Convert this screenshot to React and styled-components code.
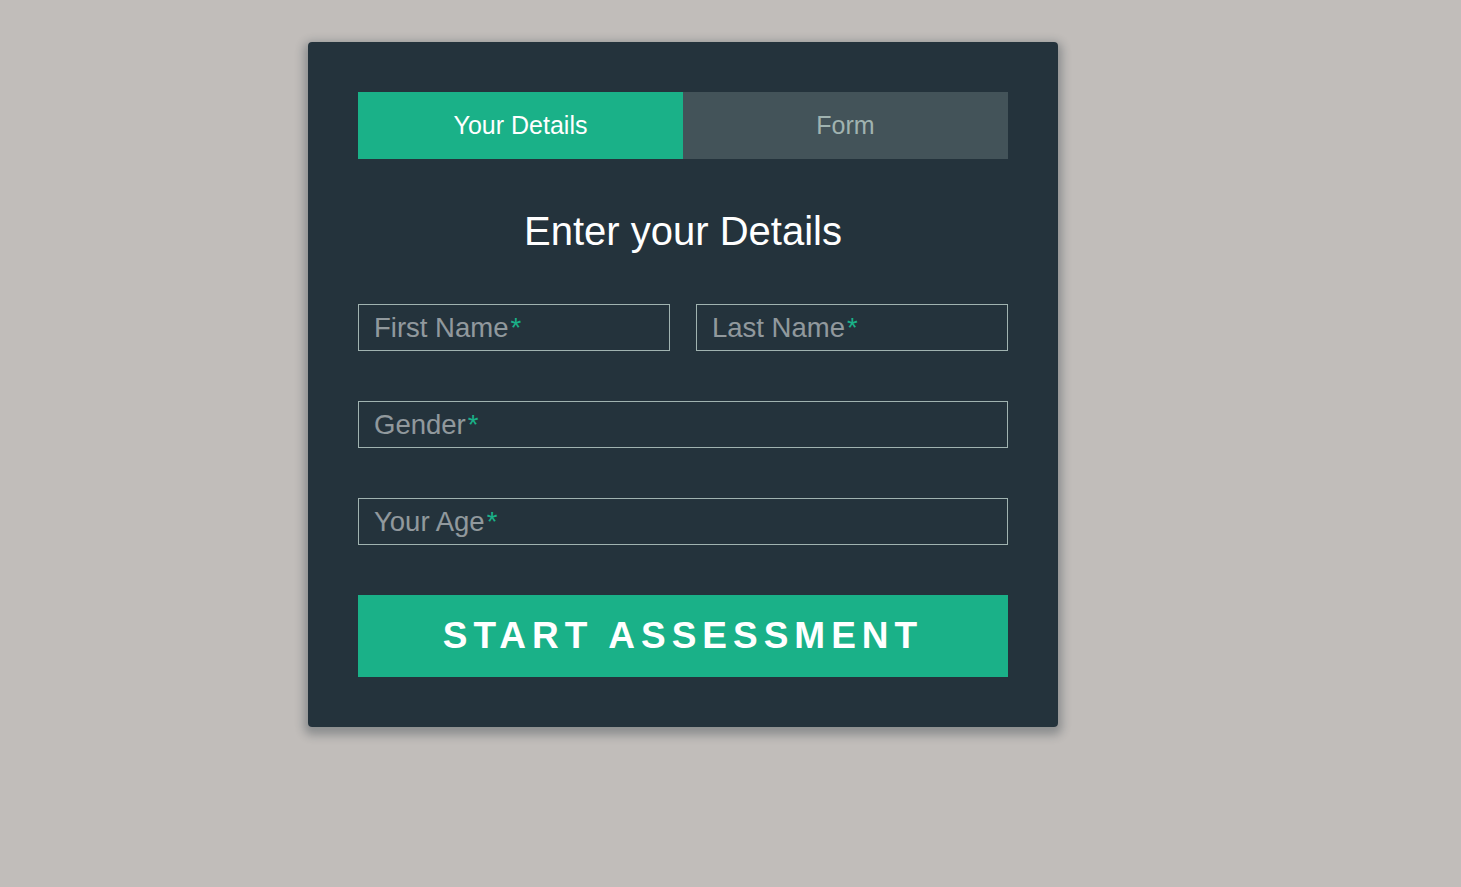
import styled, { createGlobalStyle } from 'styled-components';

const GlobalStyle = createGlobalStyle`
  *, *::before, *::after {
    box-sizing: border-box;
  }
  html, body {
    margin: 0;
    padding: 0;
    background: #c1bdba;
    font-family: "Liberation Sans", Arial, sans-serif;
  }
`;

// Page holds the card at its place on the grey background
const Page = styled.div`
  min-height: 887px;
  padding: 42px 0 0 308px;
`;

const Card = styled.div`
  width: 750px;
  padding: 50px;
  background: rgba(19, 35, 47, 0.9);
  border-radius: 4px;
  box-shadow: 0 4px 10px 4px rgba(19, 35, 47, 0.3);
`;

const TabGroup = styled.ul`
  list-style: none;
  margin: 0;
  padding: 0;
  display: grid;
  grid-template-columns: 1fr 1fr;
`;

const Tab = styled.li`
  height: 67px;
  display: flex;
  align-items: center;
  justify-content: center;
  font-size: 25px;
  color: ${(p) => (p.$active ? '#ffffff' : '#a0b3b0')};
  background: ${(p) => (p.$active ? '#1ab188' : 'rgba(160, 179, 176, 0.25)')};
  cursor: pointer;
`;

const Heading = styled.h1`
  margin: 48px 0 49px;
  font-size: 40px;
  line-height: 48px;
  font-weight: 300;
  color: #ffffff;
  text-align: center;
`;

const Form = styled.form`
  display: flex;
  flex-direction: column;
  gap: 50px;
`;

const Row = styled.div`
  display: grid;
  grid-template-columns: 1fr 1fr;
  gap: 26px;
`;

const Field = styled.label`
  height: 47px;
  display: flex;
  align-items: center;
  padding: 0 15px;
  border: 1px solid #a0b3b0;
  font-size: 27.5px;
  color: rgba(255, 255, 255, 0.5);
  cursor: text;
`;

const Req = styled.span`
  margin-left: 2px;
  color: #1ab188;
`;

const SubmitButton = styled.button`
  height: 82px;
  border: 0;
  border-radius: 0;
  background: #1ab188;
  color: #ffffff;
  font-family: inherit;
  font-size: 37px;
  font-weight: bold;
  text-transform: uppercase;
  letter-spacing: 0.162em;
  padding: 0;
  cursor: pointer;
`;

const InputField = ({ label }) => (
  <Field>
    {label}
    <Req>*</Req>
  </Field>
);

const App = () => (
  <>
    <GlobalStyle />
    <Page>
      <Card>
        <TabGroup>
          <Tab $active>Your Details</Tab>
          <Tab>Form</Tab>
        </TabGroup>

        <Heading>Enter your Details</Heading>

        <Form onSubmit={(e) => e.preventDefault()}>
          <Row>
            <InputField label="First Name" />
            <InputField label="Last Name" />
          </Row>
          <InputField label="Gender" />
          <InputField label="Your Age" />
          <SubmitButton type="submit">Start Assessment</SubmitButton>
        </Form>
      </Card>
    </Page>
  </>
);

export default App;
